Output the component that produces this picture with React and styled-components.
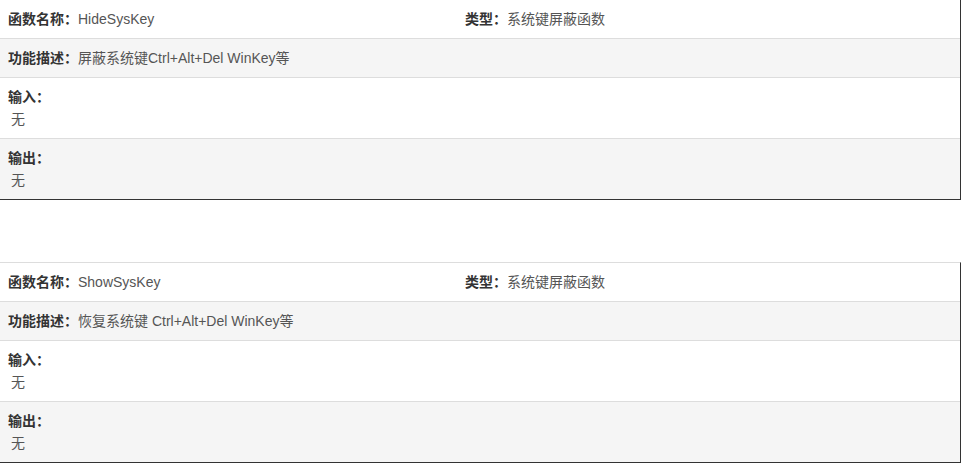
import React from "react";
import styled, { createGlobalStyle } from "styled-components";

const Global = createGlobalStyle`
  html, body { margin: 0; padding: 0; background: #fff; }
  body {
    font-family: "Liberation Sans", "Noto Sans CJK SC", Arial, sans-serif;
    font-size: 14px;
    color: #555;
  }
`;

const Page = styled.div`
  display: flex;
  flex-direction: column;
  gap: 62px;
  margin-top: -1px;
  width: 961px;
`;

const Table = styled.div`
  display: flex;
  flex-direction: column;
  border-top: 1px solid #ddd;
  border-right: 1px solid #333;
  border-bottom: 1px solid #333;
`;

const Row = styled.div`
  display: grid;
  grid-template-columns: ${(p) => (p.$split ? "457px 1fr" : "1fr")};
  background: ${(p) => (p.$striped ? "#f5f5f5" : "#fff")};
  & + & {
    border-top: 1px solid #ddd;
  }
`;

const Cell = styled.div`
  padding: 8px 8px;
  line-height: 22px;
  white-space: nowrap;
`;

const Label = styled.span`
  font-weight: bold;
  color: #333;
`;

const Value = styled.span`
  color: #555;
`;

const Block = styled.div`
  padding-left: 3px;
  color: #555;
`;

function FuncTable({ name, type, desc }) {
  return (
    <Table>
      <Row $split>
        <Cell>
          <Label>函数名称：</Label>
          <Value>{name}</Value>
        </Cell>
        <Cell>
          <Label>类型：</Label>
          <Value>{type}</Value>
        </Cell>
      </Row>
      <Row $striped>
        <Cell>
          <Label>功能描述：</Label>
          <Value>{desc}</Value>
        </Cell>
      </Row>
      <Row>
        <Cell>
          <Label>输入：</Label>
          <Block>无</Block>
        </Cell>
      </Row>
      <Row $striped>
        <Cell>
          <Label>输出：</Label>
          <Block>无</Block>
        </Cell>
      </Row>
    </Table>
  );
}

export default function App() {
  return (
    <>
      <Global />
      <Page>
        <FuncTable
          name="HideSysKey"
          type="系统键屏蔽函数"
          desc="屏蔽系统键Ctrl+Alt+Del WinKey等"
        />
        <FuncTable
          name="ShowSysKey"
          type="系统键屏蔽函数"
          desc="恢复系统键 Ctrl+Alt+Del WinKey等"
        />
      </Page>
    </>
  );
}
